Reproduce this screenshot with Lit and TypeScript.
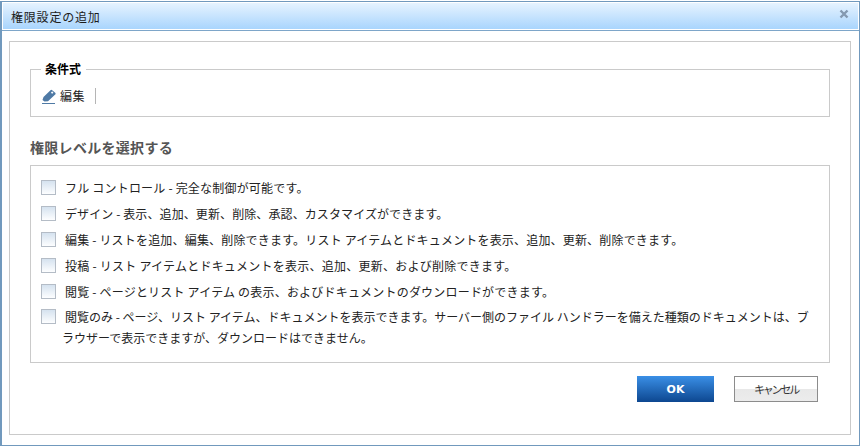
import { LitElement, html, css } from "lit";
import { customElement } from "lit/decorators.js";
import { styleMap } from "lit/directives/style-map.js";

const ROWS: [string, number][] = [
  ["フル コントロール - 完全な制御が可能です。", 0.2],
  ["デザイン - 表示、追加、更新、削除、承認、カスタマイズができます。", 0.1],
  ["編集 - リストを追加、編集、削除できます。リスト アイテムとドキュメントを表示、追加、更新、削除できます。", 0.18],
  ["投稿 - リスト アイテムとドキュメントを表示、追加、更新、および削除できます。", 0.24],
  ["閲覧 - ページとリスト アイテム の表示、およびドキュメントのダウンロードができます。", 0.2],
];
const LAST = "閲覧のみ - ページ、リスト アイテム、ドキュメントを表示できます。サーバー側のファイル ハンドラーを備えた種類のドキュメントは、ブラウザーで表示できますが、ダウンロードはできません。";

@customElement("app-root")
export class AppRoot extends LitElement {
  static styles = css`
    :host {
      display: block;
      width: 860px;
      height: 446px;
      overflow: hidden;
      background: #fff;
      font-family: "Noto Sans CJK JP", "Liberation Sans", sans-serif;
      font-size: 12px;
      color: #222;
    }
    .dialog {
      box-sizing: border-box;
      height: 445px;
      margin-top: 1px;
      border: 1px solid #7199bd;
      border-left-width: 2px;
      display: flex;
      flex-direction: column;
      background: #fff;
    }
    .title {
      box-sizing: border-box;
      height: 28px;
      flex: none;
      border: 1px solid #fff;
      background: linear-gradient(#e6f3ff, #a9d5fd);
      display: flex;
      align-items: center;
      justify-content: space-between;
      padding: 0 9px 0 8px;
      font-size: 12px;
      letter-spacing: 0.8px;
      color: #1c1c1c;
    }
    .rule { height: 1px; background: #7ea6c9; flex: none; }
    .close { width: 10px; height: 10px; display: block; margin-bottom: 5px; }
    .panel {
      box-sizing: border-box;
      margin: 10px 8px 10px 7px;
      flex: 1;
      border: 1px solid #cacaca;
      padding: 20px 20px 0 20px;
      display: flex;
      flex-direction: column;
    }
    .cond {
      box-sizing: border-box;
      height: 55px;
      flex: none;
      margin: 0;
      padding: 0 0 0 11px;
      border: 1px solid #cacaca;
      min-width: 0;
    }
    .cond legend {
      margin-left: -1px;
      padding: 0 5px 0 4px;
      font-weight: 700;
      font-size: 12px;
      line-height: 14px;
      color: #000;
    }
    .tool {
      display: flex;
      align-items: center;
      height: 16px;
      margin-top: 12px;
    }
    .tool svg { width: 14px; height: 15px; display: block; margin-right: 4px; }
    .tool span { padding-right: 10px; border-right: 1px solid #b5b5b5; line-height: 16px; letter-spacing: 0.5px; }
    h2 {
      margin: 20px 0 8px;
      font-size: 14px;
      line-height: 20px;
      font-weight: 700;
      letter-spacing: 0.3px;
      color: #555;
    }
    .list {
      box-sizing: border-box;
      height: 198px;
      flex: none;
      border: 1px solid #cacaca;
      padding: 14px 11px 0 10px;
      display: flex;
      flex-direction: column;
      gap: 8px;
    }
    .row { display: flex; align-items: flex-start; line-height: 18px; min-height: 18px; }
    .row.last { margin-top: -1px; }
    .box {
      box-sizing: border-box;
      flex: none;
      width: 15px;
      height: 15px;
      margin: 0 9px 0 0;
      border: 1px solid #b4bcc6;
      background: linear-gradient(#d5e2ef, #fdfeff);
    }
    .text { line-height: 21px; margin-top: -3px; flex: 1; }
    .last .text { margin-left: -3px; text-indent: 3px; letter-spacing: 0; }
    .actions {
      display: flex;
      justify-content: flex-end;
      gap: 20px;
      margin: 13px 12px 0 0;
    }
    button {
      box-sizing: border-box;
      height: 26px;
      font: inherit;
      padding: 0;
      margin: 0;
    }
    .ok {
      width: 77px;
      border: 0;
      color: #fff;
      font-family: "DejaVu Sans", "Liberation Sans", sans-serif;
      font-size: 11px;
      font-weight: 700;
      background: linear-gradient(#3a8fe6, #0d4790);
    }
    .cancel {
      width: 84px;
      border: 1px solid #8c8c8c;
      color: #333;
      font-size: 11px;
      letter-spacing: -2.2px;
      background: linear-gradient(#fff 0, #fff 48%, #e8e8e8 50%, #ececec 100%);
    }
  `;

  render() {
    return html`
      <div class="dialog">
        <div class="title">
          <span>権限設定の追加</span>
          <svg class="close" viewBox="0 0 10 10">
            <path d="M1.5 1.5 8.5 8.5M8.5 1.5 1.5 8.5" stroke="#8499b0" stroke-width="2.4" fill="none" />
          </svg>
        </div>
        <div class="rule"></div>
        <div class="panel">
          <fieldset class="cond">
            <legend>条件式</legend>
            <div class="tool">
              <svg viewBox="0 0 14 15">
                <path d="M0.5 11 1.5 8 8.5 1.2a1.2 1.2 0 0 1 1.7 0l3 2.6a1.2 1.2 0 0 1 0 1.7L6 12.2 2.5 12.5Z" fill="#4f7aa5" />
                <path d="M9.2 3.6h2M10.2 2.6v2" stroke="#fff" stroke-width="1" />
                <path d="M0 14.5h13" stroke="#4f7aa5" stroke-width="1" />
              </svg>
              <span>編集</span>
            </div>
          </fieldset>
          <h2>権限レベルを選択する</h2>
          <div class="list">
            ${ROWS.map(
              ([t, ls]) => html`
                <div class="row">
                  <span class="box"></span>
                  <span class="text" style=${styleMap({ letterSpacing: `${ls}px` })}>${t}</span>
                </div>
              `
            )}
            <div class="row last">
              <span class="box"></span>
              <span class="text">${LAST}</span>
            </div>
          </div>
          <div class="actions">
            <button class="ok">OK</button>
            <button class="cancel">キャンセル</button>
          </div>
        </div>
      </div>
    `;
  }
}
